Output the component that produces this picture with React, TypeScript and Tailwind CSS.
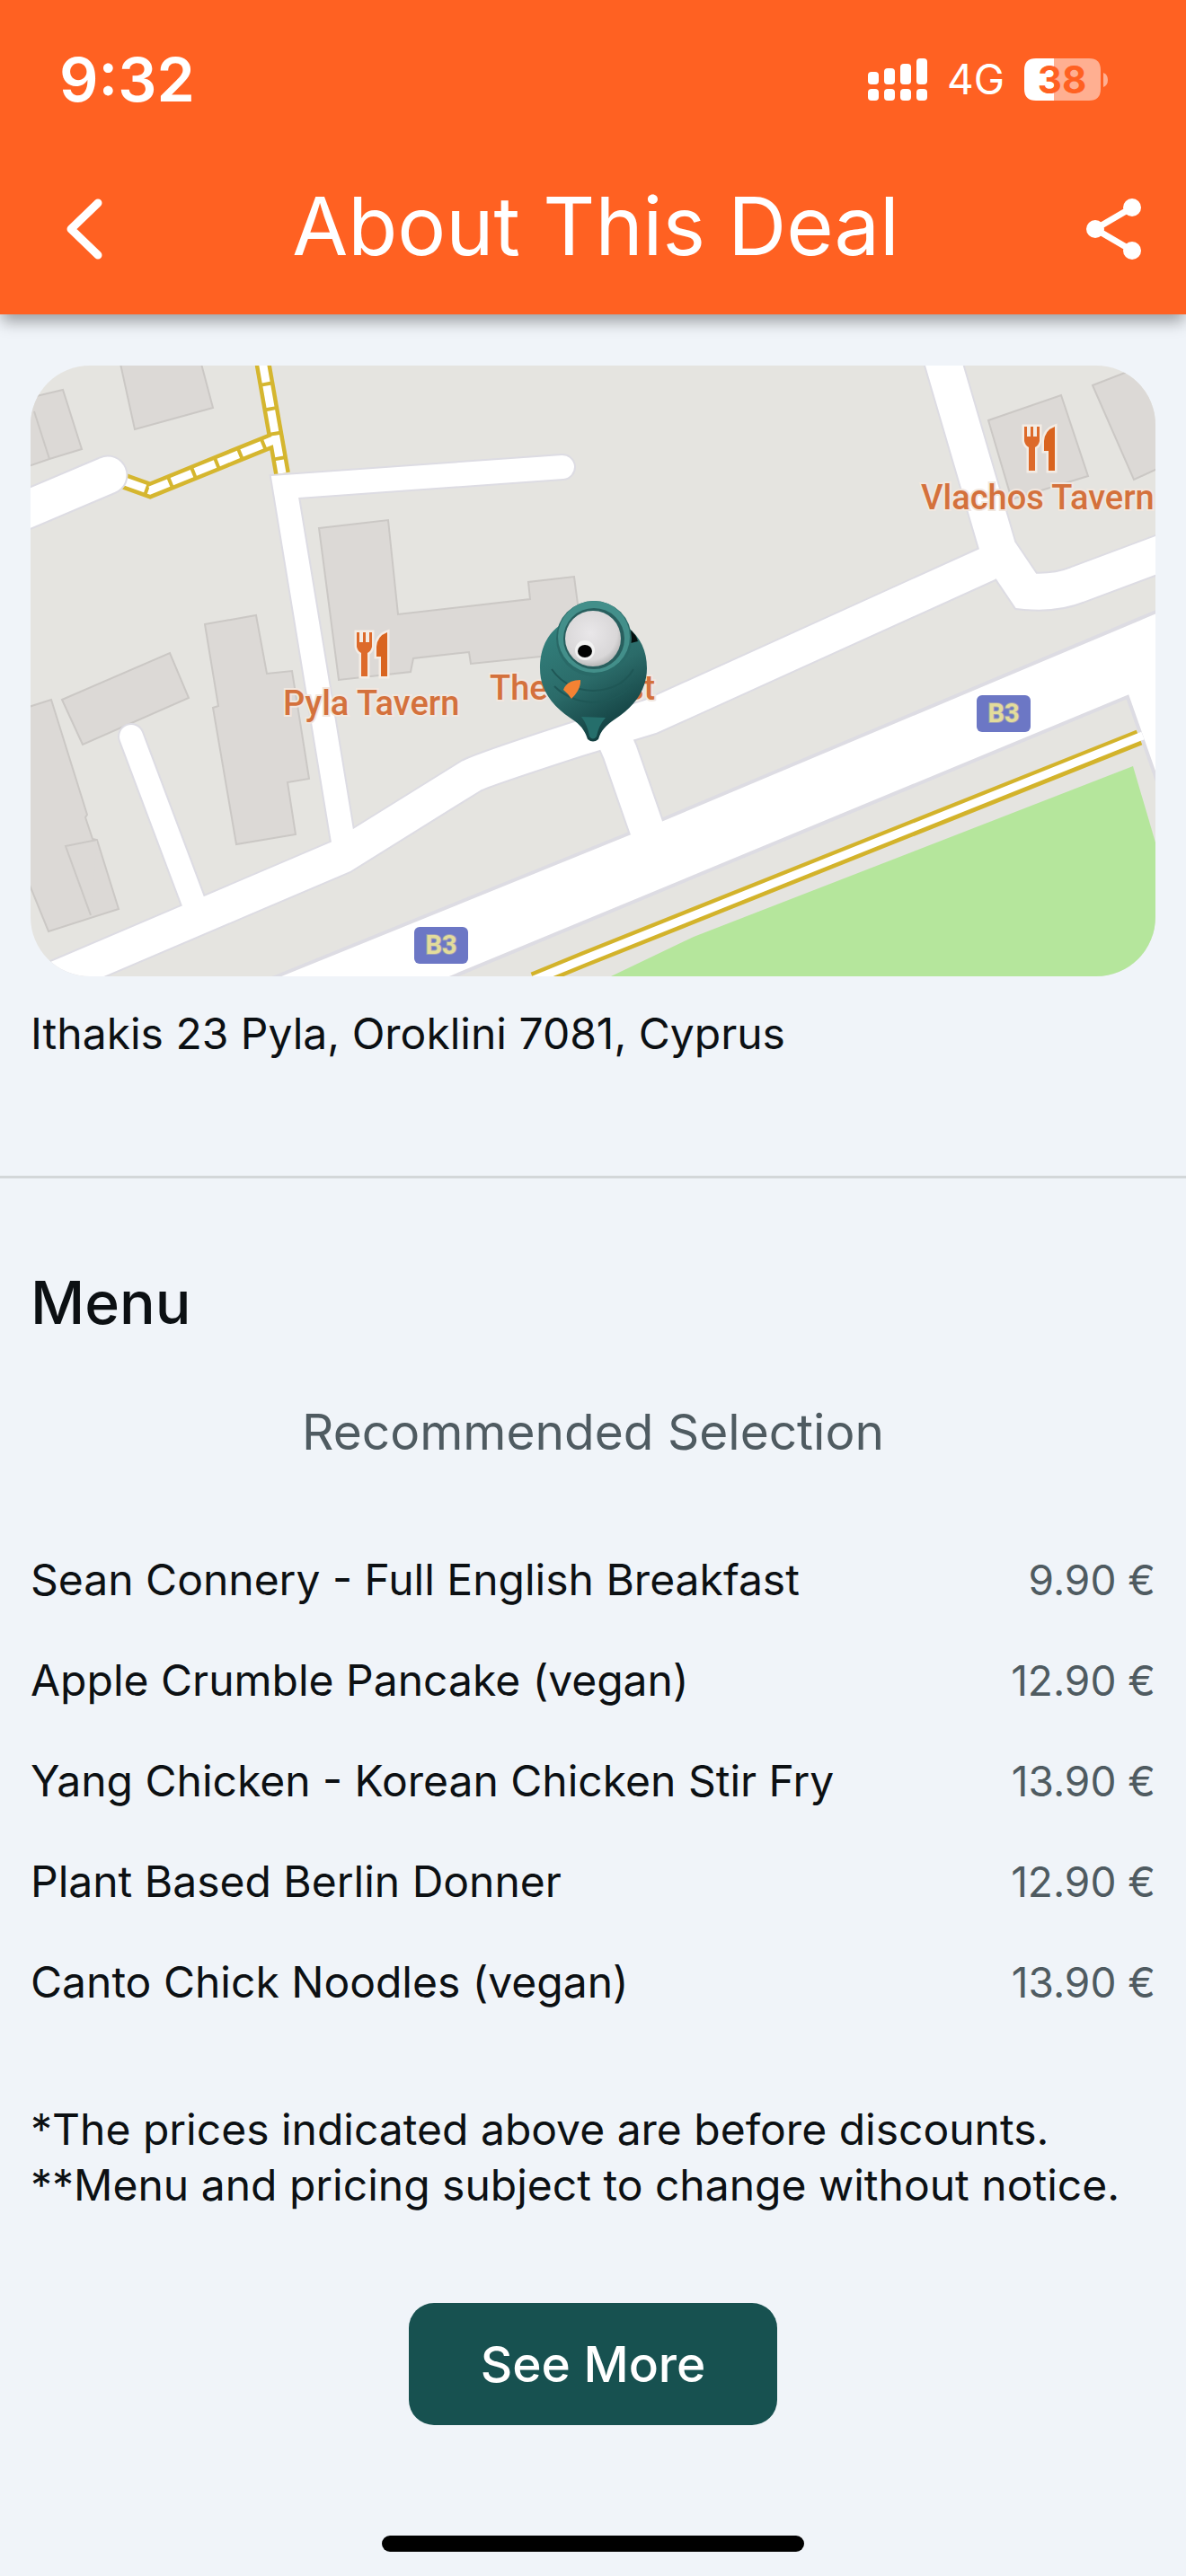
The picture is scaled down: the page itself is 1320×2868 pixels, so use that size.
import type { ReactNode } from "react";

const MENU_ITEMS = [
  { name: "Sean Connery - Full English Breakfast", price: "9.90 €" },
  { name: "Apple Crumble Pancake (vegan)", price: "12.90 €" },
  { name: "Yang Chicken - Korean Chicken Stir Fry", price: "13.90 €" },
  { name: "Plant Based Berlin Donner", price: "12.90 €" },
  { name: "Canto Chick Noodles (vegan)", price: "13.90 €" },
];

const BUILDINGS = [
  "M100 -2L116 71L203 47L190 -2Z",
  "M-2 36L36 27L57 93L21 104L-2 112Z",
  "M4 51L21 104",
  "M321 181L398 172L409 277L556 260L554 241L605 235L616 319L490 332L488 319L426 326L423 341L343 350Z",
  "M194 288L251 278L263 343L291 340L310 460L286 464L295 522L229 533L203 381L209 379Z",
  "M35 372L155 320L176 370L58 422Z",
  "M-2 380L23 372L63 500L61 503L69 527L74 528L98 605L20 630L-2 576Z",
  "M74 528L39 535L67 612",
  "M1066 61L1147 33L1177 123L1092 149Z",
  "M1182 22L1254 -6V115L1228 127Z",
];

const ROADS = [
  { d: "M-20 167L86 122", width: 41 },
  { d: "M592 113L283 135L348 530", width: 26 },
  { d: "M112 413L186 610", width: 26 },
  { d: "M-30 707L347 546L490 457Q500 451 608 416L690 391L1065 221", width: 38 },
  { d: "M1011 -20L1077 205L1108 251Q1140 254 1165 244L1280 201", width: 40 },
  { d: "M645 405L656 430L696 545", width: 38 },
];

const FOOTPATHS = ["M105 129L133 139L273 82", "M258 -5L280 120"];

function SignalBars() {
  return (
    <svg viewBox="0 0 66 47" className="h-[47px] w-[66px]" fill="#fff" aria-hidden="true">
      {[0, 18, 36, 54].map((x, i) => (
        <g key={x}>
          <rect x={x} y={[15, 11, 6, 0][i]} width="12" height={[14, 18, 23, 29][i]} rx="4" />
          <rect x={x} y="34" width="12" height="13" rx="4" />
        </g>
      ))}
    </svg>
  );
}

function Battery() {
  return (
    <svg
      viewBox="0 0 94 47"
      className="h-[47px] w-[94px] overflow-visible"
      fontFamily="Inter, sans-serif"
      role="img"
      aria-label="Battery 38%"
    >
      <path d="M33 0H72Q85 0 85 13V34Q85 47 72 47H33Z" fill="#ffaf91" />
      <path d="M33 0H13Q0 0 0 13V34Q0 47 13 47H33Z" fill="#fff" />
      <path d="M88 16Q93 18 93 24Q93 30 88 32Z" fill="#ffaf91" />
      <text x="42" y="39" textAnchor="middle" fontSize="42" fontWeight="700" fill="#ff6122">
        38
      </text>
    </svg>
  );
}

function Cutlery({ x, y }: { x: number; y: number }) {
  return (
    <g transform={`translate(${x} ${y})`} stroke="#f4ece4" strokeWidth="5" paintOrder="stroke">
      <path
        d="M0 0H3V11H7V0H10V11H14V0H17V16Q16 21 12 23V49H5V23Q1 21 0 16Z"
        fill="#dd6a2a"
      />
      <path d="M34 0V49H27V27H22V16Q23 4 34 0Z" fill="#d9641f" />
    </g>
  );
}

function RoadBadge({ x, y }: { x: number; y: number }) {
  return (
    <g transform={`translate(${x} ${y})`}>
      <rect width="60" height="41" rx="6" fill="#6c77c5" />
      <text
        x="30"
        y="30"
        textAnchor="middle"
        fontSize="29"
        fontWeight="700"
        fill="#e3dc9b"
        stroke="#9a9bb4"
        strokeWidth="2"
        paintOrder="stroke"
      >
        B3
      </text>
    </g>
  );
}

function PlaceLabel({ x, y, children }: { x: number; y: number; children: ReactNode }) {
  return (
    <text
      x={x}
      y={y}
      fontSize="38"
      fontWeight="500"
      fill="#d4713c"
      stroke="#f1e7df"
      strokeWidth="4"
      paintOrder="stroke"
    >
      {children}
    </text>
  );
}

function Pin() {
  return (
    <g>
      <defs>
        <linearGradient id="pinBody" x1="0" y1="0" x2="0.5" y2="1">
          <stop offset="0" stopColor="#33827e" />
          <stop offset="0.55" stopColor="#2b6b69" />
          <stop offset="1" stopColor="#123f40" />
        </linearGradient>
        <radialGradient id="pinEye" cx="0.45" cy="0.4" r="0.6">
          <stop offset="0" stopColor="#e9e7e9" />
          <stop offset="0.8" stopColor="#d9d7d8" />
          <stop offset="1" stopColor="#b9b9b9" />
        </radialGradient>
      </defs>
      <path
        d="M588 290C572 302 567 320 567 337C567 366 586 383 606 396C614 402 618 409 620 416Q626 421 632 416C635 406 640 401 650 394C672 380 686 361 686 337C686 318 679 302 664 291Z"
        fill="url(#pinBody)"
      />
      <path d="M666 293Q674 299 676 307L668 309Z" fill="#06100f" />
      <path
        d="M580 338Q596 361 626 362Q658 361 671 338M583 357Q600 374 626 375Q654 374 670 355"
        fill="none"
        stroke="#1f5756"
        strokeWidth="2"
      />
      <path d="M613 391Q620 400 622 413Q626 418 630 413Q632 401 640 392Z" fill="#256e6b" />
      <circle cx="627" cy="304" r="42" fill="#296967" />
      <circle cx="627" cy="302" r="40" fill="#438f8a" />
      <circle cx="627" cy="304" r="34" fill="#285f5e" />
      <circle cx="626" cy="304" r="31" fill="url(#pinEye)" />
      <circle cx="617" cy="317" r="11" fill="#f2f2f2" />
      <ellipse cx="617" cy="318" rx="8" ry="7" fill="#020202" />
      <path d="M593 361Q597 350 612 350Q613 360 602 371Q598 365 593 361Z" fill="#f58233" />
    </g>
  );
}

function DealMap() {
  return (
    <svg
      viewBox="0 0 1252 680"
      className="block h-auto w-full rounded-[66px] bg-[#e5e4e0]"
      fontFamily="Roboto, sans-serif"
      role="img"
      aria-label="Map of Ithakis 23 Pyla"
    >
      <g fill="#dcd9d6" stroke="#cbc8c5" strokeWidth="2">
        {BUILDINGS.map((d) => (
          <path key={d} d={d} />
        ))}
      </g>

      <path d="M646 680L738 636L1227 446L1252 531V680Z" fill="#b5e69c" />

      {/* footpaths */}
      <g fill="none">
        {FOOTPATHS.map((d) => (
          <path key={d} d={d} stroke="#d5b62f" strokeWidth="18" />
        ))}
        {FOOTPATHS.map((d) => (
          <path key={d} d={d} stroke="#fff" strokeWidth="9" strokeDasharray="24 4" />
        ))}
      </g>

      {/* casings first, so that junctions stay open */}
      <g fill="none" strokeLinecap="round">
        {ROADS.map((road) => (
          <path key={road.d} d={road.d} stroke="#dddce3" strokeWidth={road.width + 4} />
        ))}
        <path
          d="M224 700L274 680L666 521L1260 271V480L1221 369L471 680L423 700Z"
          fill="#fff"
          stroke="#dddce3"
          strokeWidth="4"
        />
        {ROADS.map((road) => (
          <path key={road.d} d={road.d} stroke="#fff" strokeWidth={road.width} />
        ))}
      </g>

      <path d="M560 684L616 661L1234 414" fill="none" stroke="#d3b32b" strokeWidth="18" />
      <path d="M560 684L616 661L1238 412" fill="none" stroke="#fff" strokeWidth="9" />

      <Cutlery x={363} y={297} />
      <Cutlery x={1106} y={68} />
      <PlaceLabel x={281} y={389}>Pyla Tavern</PlaceLabel>
      <PlaceLabel x={991} y={160}>Vlachos Tavern</PlaceLabel>
      <PlaceLabel x={511} y={372}>The</PlaceLabel>
      <PlaceLabel x={663} y={372}>st</PlaceLabel>
      <RoadBadge x={427} y={625} />
      <RoadBadge x={1053} y={367} />
      <Pin />
    </svg>
  );
}

function Header() {
  return (
    <header className="relative bg-[#ff6122] text-white shadow-[0_10px_16px_-2px_rgba(0,0,0,0.35)]">
      <div className="flex h-[176px] items-center justify-between pr-[86px] pl-[66px]">
        <span className="text-[68px] font-semibold">9:32</span>
        <div className="flex items-center gap-[22px]">
          <SignalBars />
          <span className="text-[46px]">4G</span>
          <Battery />
        </div>
      </div>
      <div className="flex h-[174px] items-start justify-between pr-[48px] pl-[70px]">
        <button type="button" aria-label="Back" className="mt-11">
          <svg
            viewBox="0 0 48 70"
            className="h-[70px] w-12"
            fill="none"
            stroke="#fff"
            strokeWidth="9"
            strokeLinecap="round"
            strokeLinejoin="round"
          >
            <path d="M39 6L9 35L39 64" />
          </svg>
        </button>
        <h1 className="mt-4 text-[90px] leading-[120px]">About This Deal</h1>
        <button type="button" aria-label="Share" className="mt-11">
          <svg viewBox="0 0 64 70" className="h-[70px] w-16" fill="#fff" stroke="#fff">
            <path d="M52 11L11 35L52 59" fill="none" strokeWidth="7" />
            <circle cx="52" cy="11" r="10" stroke="none" />
            <circle cx="11" cy="35" r="10" stroke="none" />
            <circle cx="52" cy="59" r="10" stroke="none" />
          </svg>
        </button>
      </div>
    </header>
  );
}

export default function App() {
  return (
    <div className="flex flex-col bg-[#f0f4f9] font-[Inter,sans-serif] text-[#0c1013]">
      <Header />

      <main>
        <section className="border-b-[3px] border-[#d3d7d9] px-[34px] pt-[57px] pb-[124px]">
          <DealMap />
          <p className="mt-[30px] text-[48px] leading-[68px]">Ithakis 23 Pyla, Oroklini 7081, Cyprus</p>
        </section>

        <section className="px-[34px] pt-24">
          <h2 className="text-[66px] leading-[84px] font-medium">Menu</h2>
          <h3 className="mt-[66px] text-center text-[55px] leading-[72px] text-[#4f5b61]">
            Recommended Selection
          </h3>

          <ul className="mt-[73px] text-[48px]">
            {MENU_ITEMS.map((item) => (
              <li key={item.name} className="flex h-28 items-center justify-between">
                <span>{item.name}</span>
                <span className="text-[46px] text-[#4f5b61]">{item.price}</span>
              </li>
            ))}
          </ul>

          <p className="mt-[77px] text-[48px] leading-[62px]">
            *The prices indicated above are before discounts.
            <br />
            **Menu and pricing subject to change without notice.
          </p>

          <div className="mt-[100px] flex justify-center">
            <button
              type="button"
              className="h-[136px] w-[410px] rounded-[28px] bg-[#175150] text-[55px] font-medium text-white"
            >
              See More
            </button>
          </div>
        </section>
      </main>

      <div className="mx-auto mt-[123px] mb-[27px] h-[18px] w-[470px] rounded-full bg-black" />
    </div>
  );
}
